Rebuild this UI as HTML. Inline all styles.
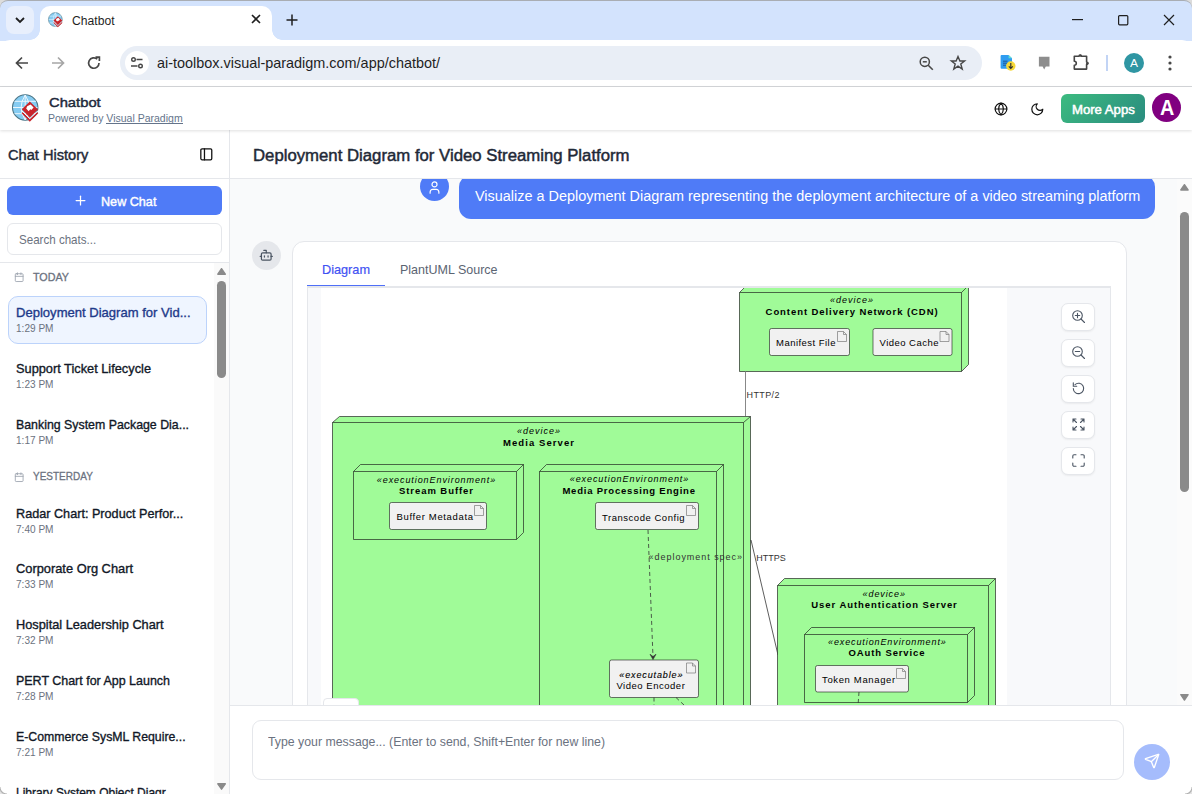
<!DOCTYPE html>
<html><head><meta charset="utf-8">
<style>
*{box-sizing:border-box;margin:0;padding:0}
html,body{width:1192px;height:794px;overflow:hidden;font-family:"Liberation Sans",sans-serif;background:#fff;position:relative}
.abs{position:absolute}
.t{position:absolute;line-height:1;white-space:nowrap;transform-origin:0 0}
svg{display:block;position:absolute;overflow:visible}
</style></head><body>

<div class="abs" style="left:0;top:0;width:1192px;height:41px;background:#dcdcdc"></div><div class="abs" style="left:0;top:0;width:1192px;height:41px;background:#d3e3fd;border-top:1px solid #a9adb3;border-radius:8px 8px 0 0"></div>
<div class="abs" style="left:6px;top:6px;width:28px;height:28px;background:#e8effc;border-radius:8px"></div>
<svg style="left:14px;top:15px" width="12" height="10" viewBox="0 0 12 10"><path d="M2 3 L6 7 L10 3" fill="none" stroke="#1f1f1f" stroke-width="1.8"/></svg>
<div class="abs" style="left:40px;top:6px;width:232px;height:36px;background:#fff;border-radius:10px 10px 0 0"></div>
<div class="abs" style="left:30px;top:30px;width:10px;height:10px;background:radial-gradient(circle at 0 0,transparent 9.5px,#fff 10px)"></div>
<div class="abs" style="left:272px;top:30px;width:10px;height:10px;background:radial-gradient(circle at 100% 0,transparent 9.5px,#fff 10px)"></div>
<svg style="left:46.36px;top:10.26px" width="18.5" height="18.5" viewBox="8 90 34 34">
  <circle cx="25.2" cy="107.5" r="12.7" fill="#86ccf2" stroke="#4d7686" stroke-width="1.1"/>
  <g stroke="#eaf6fd" stroke-width="1" fill="none">
    <path d="M14.5 101.3H36M13 107.5H37.5M14.5 113.7H36"/>
    <path d="M25.2 95V120M25.2 95Q17 107.5 25.2 120M25.2 95Q33.4 107.5 25.2 120"/>
  </g>
  <path d="M22.3 112.6 L29.8 120.3 L37.6 112.6" fill="none" stroke="#c9242b" stroke-width="1.9"/>
  <path d="M21.5 110.5 L29.8 118.6 L38.4 110.5" fill="none" stroke="#fff" stroke-width="1"/>
  <path d="M29.8 101.4 L38.1 109.5 L29.8 117.4 L21.8 109.3Z" fill="#c9242b"/>
  <path d="M27.2 106.3 L30.6 104.4 L33.6 107.6 L31.4 110.1 L30.3 109.2 L28.6 111.3 L26.2 108.6Z" fill="#fff"/>
</svg>
<svg style="left:250px;top:13px" width="12" height="12" viewBox="0 0 12 12"><path d="M2 2L10 10M10 2L2 10" stroke="#1f1f1f" stroke-width="1.6"/></svg>
<svg style="left:286px;top:14px" width="12" height="12" viewBox="0 0 12 12"><path d="M6 0.5V11.5M0.5 6H11.5" stroke="#1f1f1f" stroke-width="1.5"/></svg>
<svg style="left:1072px;top:19px" width="11" height="2"><rect width="11" height="1.2" fill="#1f1f1f"/></svg>
<svg style="left:1117px;top:14px" width="12" height="12" viewBox="0 0 12 12"><rect x="1.6" y="1.6" width="9.2" height="9.2" rx="1" fill="none" stroke="#1f1f1f" stroke-width="1.2"/></svg>
<svg style="left:1163px;top:14px" width="12" height="12" viewBox="0 0 12 12"><path d="M1 1L11 11M11 1L1 11" stroke="#1f1f1f" stroke-width="1.2"/></svg>
<div class="abs" style="left:0;top:40px;width:1192px;height:47px;background:#fff;border-bottom:1px solid #d5d7da;border-radius:10px 10px 0 0"></div>
<svg style="left:14px;top:55px" width="16" height="16" viewBox="0 0 16 16"><path d="M14 8H2.5M8 2.5L2.5 8L8 13.5" fill="none" stroke="#474747" stroke-width="1.7"/></svg>
<svg style="left:50px;top:55px" width="16" height="16" viewBox="0 0 16 16"><path d="M2 8H13.5M8 2.5L13.5 8L8 13.5" fill="none" stroke="#a6a6a6" stroke-width="1.7"/></svg>
<svg style="left:86px;top:55px" width="16" height="16" viewBox="0 0 16 16"><path d="M13 8A5.2 5.2 0 1 1 11.3 4.2" fill="none" stroke="#474747" stroke-width="1.7"/><path d="M9.5 2.2H13.4V6.1" fill="none" stroke="#474747" stroke-width="1.7"/></svg>
<div class="abs" style="left:120px;top:46px;width:862px;height:34px;background:#e9eef6;border-radius:17px"></div>
<div class="abs" style="left:125px;top:51px;width:24px;height:24px;border-radius:12px;background:#fff"></div>
<svg style="left:130px;top:56px" width="14" height="14" viewBox="0 0 14 14"><circle cx="3.5" cy="3.5" r="1.8" fill="none" stroke="#474747" stroke-width="1.4"/><path d="M6.5 3.5H12.5M1 10H7.5" stroke="#474747" stroke-width="1.4"/><circle cx="10.5" cy="10" r="1.8" fill="none" stroke="#474747" stroke-width="1.4"/></svg>
<svg style="left:919px;top:56px" width="15" height="15" viewBox="0 0 15 15"><circle cx="5.8" cy="5.8" r="4.6" fill="none" stroke="#474747" stroke-width="1.5"/><path d="M3.8 5.8H7.8" stroke="#474747" stroke-width="1.5"/><path d="M9.2 9.2L13.8 13.8" stroke="#474747" stroke-width="1.6"/></svg>
<svg style="left:950px;top:55px" width="16" height="16" viewBox="0 0 16 16"><path d="M8 1.5L9.9 6H14.6L10.8 9L12.2 14L8 11.1L3.8 14L5.2 9L1.4 6H6.1Z" fill="none" stroke="#474747" stroke-width="1.4"/></svg>
<svg style="left:990px;top:48px" width="110" height="30" viewBox="990 48 110 30">
  <path d="M1001.6 54.9 H1008.6 L1012 58.3 V67.6 A1 1 0 0 1 1011 68.7 H1001.6 A1 1 0 0 1 1000.6 67.7 V55.9 A1 1 0 0 1 1001.6 54.9Z" fill="#2f9cf0"/>
  <path d="M1008.6 54.9 L1012 58.3 H1008.6Z" fill="#5fe3d0"/>
  <path d="M1003 61.2H1007.5M1003 63.2H1007.5M1003 65.2H1006" stroke="#1d4f8c" stroke-width="0.9"/>
  <circle cx="1010.8" cy="66" r="4.7" fill="#f6d838"/>
  <path d="M1010.8 63V68.3M1008.8 66.4L1010.8 68.5L1012.8 66.4" fill="none" stroke="#2d2d2d" stroke-width="1.1"/>
  <path d="M1038.9 56.8H1049.5V66.5H1045.8L1044.2 69.5L1042.6 66.5H1038.9Z" fill="#8d8d8d"/>
  <path d="M1074.3 56.3H1079A1.2 1.2 0 0 1 1081.4 56.3H1086.6V62A1.2 1.2 0 0 1 1086.6 64.4V69.1H1074.3V65.2A2 2 0 0 0 1074.3 61.2Z" fill="none" stroke="#454545" stroke-width="1.6" stroke-linejoin="round"/><circle cx="1080.2" cy="55.6" r="1.2" fill="#454545"/><circle cx="1087.4" cy="63.2" r="1.2" fill="#454545"/>
</svg>
<div class="abs" style="left:1106px;top:55px;width:1.5px;height:16px;background:#c2d4f5"></div>
<div class="abs" style="left:1124px;top:53px;width:20px;height:20px;border-radius:10px;background:#2f96a3"></div>
<svg style="left:1167px;top:55px" width="6" height="16" viewBox="0 0 6 16"><circle cx="3" cy="2" r="1.6" fill="#474747"/><circle cx="3" cy="8" r="1.6" fill="#474747"/><circle cx="3" cy="14" r="1.6" fill="#474747"/></svg>

<div class="t" style="left:72.10px;top:14.62px;font-size:12.5px;color:#1f1f1f;transform:scaleX(0.9709);">Chatbot</div>
<div class="t" style="left:157.00px;top:55.73px;font-size:14.5px;color:#1f1f1f;transform:scaleX(0.9947);">ai-toolbox.visual-paradigm.com/app/chatbot/</div>
<div class="t" style="left:1130.00px;top:58.19px;font-size:11px;color:#fff;transform:scaleX(1.0904);">A</div>
<div class="abs" style="left:0;top:87px;width:1192px;height:43px;background:#fff;box-shadow:0 1px 3px rgba(0,0,0,.13);z-index:3"></div>
<div class="abs" style="left:0;top:87px;width:1192px;height:43px;z-index:4">
<svg style="left:8px;top:3px" width="34" height="34" viewBox="8 90 34 34">
  <circle cx="25.2" cy="107.5" r="12.7" fill="#86ccf2" stroke="#4d7686" stroke-width="1.1"/>
  <g stroke="#eaf6fd" stroke-width="1" fill="none">
    <path d="M14.5 101.3H36M13 107.5H37.5M14.5 113.7H36"/>
    <path d="M25.2 95V120M25.2 95Q17 107.5 25.2 120M25.2 95Q33.4 107.5 25.2 120"/>
  </g>
  <path d="M22.3 112.6 L29.8 120.3 L37.6 112.6" fill="none" stroke="#c9242b" stroke-width="1.9"/>
  <path d="M21.5 110.5 L29.8 118.6 L38.4 110.5" fill="none" stroke="#fff" stroke-width="1"/>
  <path d="M29.8 101.4 L38.1 109.5 L29.8 117.4 L21.8 109.3Z" fill="#c9242b"/>
  <path d="M27.2 106.3 L30.6 104.4 L33.6 107.6 L31.4 110.1 L30.3 109.2 L28.6 111.3 L26.2 108.6Z" fill="#fff"/>
</svg>
<svg style="left:994.15px;top:14.5px" width="14" height="14" viewBox="0 0 24 24" fill="none" stroke="#111" stroke-width="2" stroke-linecap="round" stroke-linejoin="round"><circle cx="12" cy="12" r="10"/><path d="M12 2a14.5 14.5 0 0 0 0 20 14.5 14.5 0 0 0 0-20"/><path d="M2 12h20"/></svg>
<svg style="left:1029.8px;top:14.9px" width="14.6" height="14.6" viewBox="0 0 24 24" fill="none" stroke="#111" stroke-width="2" stroke-linecap="round" stroke-linejoin="round"><path d="M12 3a6 6 0 0 0 9 9 9 9 0 1 1-9-9Z"/></svg>
<div class="abs" style="left:1061px;top:7px;width:84px;height:29px;border-radius:6px;background:linear-gradient(135deg,#3cbb80,#2a8c7f)"></div>
<div class="abs" style="left:1152px;top:6px;width:29px;height:29px;border-radius:15px;background:#800080"></div>
</div>
<div class="abs" style="left:0;top:0;width:1192px;height:794px;z-index:5;pointer-events:none">

<div class="t" style="left:48.50px;top:96.27px;font-size:13.5px;color:#1e293b;transform:scaleX(1.0936);-webkit-text-stroke:0.45px #1e293b;">Chatbot</div>
<div class="t" style="left:48.00px;top:112.61px;font-size:10.5px;color:#64748b;">Powered by Visual Paradigm</div>
<div class="abs" style="left:106px;top:122.5px;width:76.5px;height:1px;background:#64748b"></div>
<div class="t" style="left:1072.00px;top:104.02px;font-size:12.5px;color:#fff;transform:scaleX(1.0510);-webkit-text-stroke:0.5px #fff;">More Apps</div>
<div class="t" style="left:1159.70px;top:96.98px;font-size:22px;color:#fff;font-weight:bold;transform:scaleX(0.9003);">A</div>
</div>
<div class="abs" style="left:0;top:130px;width:230px;height:664px;background:#fff;border-right:1px solid #e5e7eb"></div>
<div class="abs" style="left:0;top:178px;width:229px;height:1px;background:#e5e7eb"></div>
<svg style="left:199px;top:146.8px" width="14.6" height="14.6" viewBox="0 0 24 24" fill="none" stroke="#111" stroke-width="2.1" stroke-linecap="round" stroke-linejoin="round"><rect width="18" height="18" x="3" y="3" rx="2"/><path d="M9 3v18"/></svg>
<div class="abs" style="left:7px;top:186px;width:215px;height:29px;border-radius:6px;background:#4f7bf7"></div>
<svg style="left:72.5px;top:192.9px" width="15" height="15" viewBox="0 0 24 24" fill="none" stroke="#fff" stroke-width="2" stroke-linecap="round" stroke-linejoin="round"><path d="M5 12h14"/><path d="M12 5v14"/></svg>
<div class="abs" style="left:7px;top:222.5px;width:215px;height:32px;border-radius:6px;border:1px solid #e5e7eb;background:#fff"></div>
<div class="abs" style="left:0;top:262px;width:229px;height:1px;background:#e5e7eb"></div>
<div class="abs" style="left:214px;top:263px;width:15px;height:531px;background:#fafafa"></div>
<svg style="left:210px;top:260px" width="20" height="20" viewBox="210 260 20 20"><path d="M217.8 274.2L225.3 274.2L221.55 268.7Z" fill="#8a8a8a" stroke="#8a8a8a" stroke-width="1.4" stroke-linejoin="round"/></svg>
<div class="abs" style="left:217px;top:281px;width:9px;height:97px;border-radius:4.5px;background:#8a8a8a"></div>
<svg style="left:210px;top:775px" width="20" height="19" viewBox="210 775 20 19"><path d="M217.8 783.8L225.3 783.8L221.55 789.2Z" fill="#8a8a8a" stroke="#8a8a8a" stroke-width="1.4" stroke-linejoin="round"/></svg>
<div class="abs" style="left:7.5px;top:295.5px;width:199px;height:48px;border-radius:10px;background:#eff5ff;border:1px solid #bcd3fb"></div>

<div class="t" style="left:7.70px;top:148.15px;font-size:14px;color:#1f2937;transform:scaleX(1.0427);-webkit-text-stroke:0.4px #1f2937;">Chat History</div>
<div class="t" style="left:100.60px;top:196.22px;font-size:12.5px;color:#fff;transform:scaleX(1.0093);-webkit-text-stroke:0.4px #fff;">New Chat</div>
<div class="t" style="left:19.30px;top:233.20px;font-size:13px;color:#6b7280;transform:scaleX(0.8903);">Search chats...</div>
<svg style="left:14.2px;top:271.6px" width="10.4" height="10.4" viewBox="0 0 24 24" fill="none" stroke="#9ca3af" stroke-width="2" stroke-linecap="round" stroke-linejoin="round"><path d="M8 2v4"/><path d="M16 2v4"/><rect width="18" height="18" x="3" y="4" rx="2"/><path d="M3 10h18"/></svg>
<div class="t" style="left:33.00px;top:271.69px;font-size:11px;color:#6b7280;transform:scaleX(0.9761);-webkit-text-stroke:0.3px #6b7280;">TODAY</div>
<svg style="left:14.2px;top:471.6px" width="10.4" height="10.4" viewBox="0 0 24 24" fill="none" stroke="#9ca3af" stroke-width="2" stroke-linecap="round" stroke-linejoin="round"><path d="M8 2v4"/><path d="M16 2v4"/><rect width="18" height="18" x="3" y="4" rx="2"/><path d="M3 10h18"/></svg>
<div class="t" style="left:32.80px;top:471.39px;font-size:11px;color:#6b7280;transform:scaleX(0.9086);-webkit-text-stroke:0.3px #6b7280;">YESTERDAY</div>
<div class="t" style="left:16.00px;top:305.80px;font-size:13px;color:#1e3a8a;transform:scaleX(1.0041);-webkit-text-stroke:0.35px #1e3a8a;">Deployment Diagram for Vid...</div>
<div class="t" style="left:16.00px;top:322.91px;font-size:10.5px;color:#6b7280;transform:scaleX(0.9590);">1:29 PM</div>
<div class="t" style="left:16.00px;top:361.90px;font-size:13px;color:#111827;transform:scaleX(0.9833);-webkit-text-stroke:0.35px #111827;">Support Ticket Lifecycle</div>
<div class="t" style="left:16.00px;top:379.11px;font-size:10.5px;color:#6b7280;transform:scaleX(0.9590);">1:23 PM</div>
<div class="t" style="left:16.00px;top:418.20px;font-size:13px;color:#111827;transform:scaleX(0.9501);-webkit-text-stroke:0.35px #111827;">Banking System Package Dia...</div>
<div class="t" style="left:16.00px;top:434.81px;font-size:10.5px;color:#6b7280;transform:scaleX(0.9590);">1:17 PM</div>
<div class="t" style="left:16.00px;top:506.80px;font-size:13px;color:#111827;transform:scaleX(0.9729);-webkit-text-stroke:0.35px #111827;">Radar Chart: Product Perfor...</div>
<div class="t" style="left:16.00px;top:523.61px;font-size:10.5px;color:#6b7280;transform:scaleX(0.9590);">7:40 PM</div>
<div class="t" style="left:16.00px;top:561.80px;font-size:13px;color:#111827;transform:scaleX(0.9874);-webkit-text-stroke:0.35px #111827;">Corporate Org Chart</div>
<div class="t" style="left:16.00px;top:579.01px;font-size:10.5px;color:#6b7280;transform:scaleX(0.9590);">7:33 PM</div>
<div class="t" style="left:16.00px;top:617.50px;font-size:13px;color:#111827;transform:scaleX(0.9820);-webkit-text-stroke:0.35px #111827;">Hospital Leadership Chart</div>
<div class="t" style="left:16.00px;top:635.11px;font-size:10.5px;color:#6b7280;transform:scaleX(0.9590);">7:32 PM</div>
<div class="t" style="left:16.00px;top:673.60px;font-size:13px;color:#111827;transform:scaleX(0.9585);-webkit-text-stroke:0.35px #111827;">PERT Chart for App Launch</div>
<div class="t" style="left:16.00px;top:691.01px;font-size:10.5px;color:#6b7280;transform:scaleX(0.9590);">7:28 PM</div>
<div class="t" style="left:16.00px;top:729.90px;font-size:13px;color:#111827;transform:scaleX(0.9454);-webkit-text-stroke:0.35px #111827;">E-Commerce SysML Require...</div>
<div class="t" style="left:16.00px;top:747.11px;font-size:10.5px;color:#6b7280;transform:scaleX(0.9590);">7:21 PM</div>
<div class="t" style="left:16.00px;top:785.60px;font-size:13px;color:#111827;transform:scaleX(0.9209);-webkit-text-stroke:0.35px #111827;">Library System Object Diagr...</div>
<div class="t" style="left:16.00px;top:802.71px;font-size:10.5px;color:#6b7280;transform:scaleX(0.9590);">7:18 PM</div>
<div class="abs" style="left:230px;top:130px;width:962px;height:49px;background:#fff;border-bottom:1px solid #e5e7eb"></div>
<div class="abs" style="left:230px;top:179px;width:962px;height:526px;background:#f9fafb;overflow:hidden">

</div>
<div class="abs" style="left:230px;top:179px;width:962px;height:526px;overflow:hidden">
<div class="abs" style="left:-230px;top:-179px;width:1192px;height:794px">
<div class="abs" style="left:420px;top:172px;width:29px;height:29px;border-radius:15px;background:#4f7bf7"></div>
<svg style="left:426.6px;top:179.97px" width="15" height="15" viewBox="0 0 24 24" fill="none" stroke="#fff" stroke-width="1.9" stroke-linecap="round" stroke-linejoin="round"><circle cx="12" cy="7" r="4"/><path d="M19 21v-2a4 4 0 0 0-4-4H9a4 4 0 0 0-4 4v2"/></svg>
<div class="abs" style="left:459px;top:174.5px;width:696px;height:44.3px;border-radius:12px;background:#4f7bf7"></div>
<div class="t" style="left:474.60px;top:188.85px;font-size:14px;color:#fff;transform:scaleX(1.0306);">Visualize a Deployment Diagram representing the deployment architecture of a video streaming platform</div>
<div class="abs" style="left:252px;top:241px;width:29px;height:29px;border-radius:15px;background:#e5e7eb"></div>
<svg style="left:259.2px;top:247.9px" width="14.5" height="14.5" viewBox="0 0 24 24" fill="none" stroke="#4b5563" stroke-width="2" stroke-linecap="round" stroke-linejoin="round"><path d="M12 8V4H8"/><rect width="16" height="12" x="4" y="8" rx="2"/><path d="M2 14h2"/><path d="M20 14h2"/><path d="M15 13v2"/><path d="M9 13v2"/></svg>
<div class="abs" style="left:292px;top:241px;width:835px;height:600px;border-radius:12px;background:#fff;border:1px solid #e5e7eb"></div>
<div class="t" style="left:322.00px;top:263.00px;font-size:13px;color:#3f52f3;transform:scaleX(0.9771);-webkit-text-stroke:0.2px #3f52f3;">Diagram</div>
<div class="t" style="left:399.50px;top:263.00px;font-size:13px;color:#5b6472;transform:scaleX(0.9615);">PlantUML Source</div>
<div class="abs" style="left:307px;top:286.3px;width:804px;height:1.5px;background:#e5e7eb"></div>
<div class="abs" style="left:307px;top:284.8px;width:78px;height:1.6px;background:#4f6ff7"></div>
<div class="abs" style="left:307px;top:287.5px;width:804px;height:500px;background:#f8f9fb;border:1px solid #e5e7eb;border-top:none"></div>
<div class="abs" style="left:321px;top:288px;width:686px;height:500px;background:#fff"></div>
<div class="abs" style="left:308px;top:288px;width:802px;height:500px;overflow:hidden">
<svg style="left:-308px;top:-288px" width="1192" height="794" viewBox="0 0 1192 794" font-family="Liberation Sans">
<rect x="0" y="0" width="0" height="0"/>
<path d="M739.5 292.5 L746.5 285.5 L968.5 285.5 L968.5 364.5 L961.5 371.5 L739.5 371.5 Z" fill="#a0fb98" stroke="#181818" stroke-opacity="0.65" stroke-width="1"/><path d="M739.5 292.5 L961.5 292.5 L968.5 285.5 M961.5 292.5 L961.5 371.5" fill="none" stroke="#181818" stroke-opacity="0.65" stroke-width="1"/>
<rect x="769.5" y="328.5" width="80.0" height="27.0" rx="2" fill="#f1f1f1" stroke="#181818" stroke-width="0.6"/><path d="M837.5 331.5 H843.5 L846.5 334.5 V341.5 H837.5 Z M843.5 331.5 V334.5 H846.5" fill="#f1f1f1" stroke="#7a7a7a" stroke-width="0.7"/>
<rect x="873" y="328.5" width="79" height="27.0" rx="2" fill="#f1f1f1" stroke="#181818" stroke-width="0.6"/><path d="M940 331.5 H946 L949 334.5 V341.5 H940 Z M946 331.5 V334.5 H949" fill="#f1f1f1" stroke="#7a7a7a" stroke-width="0.7"/>
<text x="830.00" y="303.10" font-size="9" fill="#000" textLength="43.00" lengthAdjust="spacing" font-style="italic">«device»</text>
<text x="765.60" y="314.70" font-size="9.5" fill="#000" textLength="172.00" lengthAdjust="spacing" font-weight="bold">Content Delivery Network (CDN)</text>
<text x="776.00" y="346.10" font-size="9.5" fill="#000" textLength="59.50" lengthAdjust="spacing">Manifest File</text>
<text x="879.50" y="346.10" font-size="9.5" fill="#000" textLength="59.00" lengthAdjust="spacing">Video Cache</text>
<path d="M745.5 371.5 V416" stroke="#888" stroke-width="1" fill="none"/>
<text x="746.50" y="397.50" font-size="9" fill="#333" textLength="33.00" lengthAdjust="spacing">HTTP/2</text>
<path d="M332.5 422.5 L339.5 416.5 L750.5 416.5 L750.5 754 L743.5 760 L332.5 760 Z" fill="#a0fb98" stroke="#181818" stroke-opacity="0.65" stroke-width="1"/><path d="M332.5 422.5 L743.5 422.5 L750.5 416.5 M743.5 422.5 L743.5 760" fill="none" stroke="#181818" stroke-opacity="0.65" stroke-width="1"/>
<text x="517.00" y="434.30" font-size="9" fill="#000" textLength="43.00" lengthAdjust="spacing" font-style="italic">«device»</text>
<text x="503.00" y="445.80" font-size="9.5" fill="#000" textLength="71.00" lengthAdjust="spacing" font-weight="bold">Media Server</text>
<path d="M353.5 471.5 L360.5 464.5 L523.5 464.5 L523.5 532.5 L516.5 539.5 L353.5 539.5 Z" fill="#a0fb98" stroke="#181818" stroke-opacity="0.65" stroke-width="1"/><path d="M353.5 471.5 L516.5 471.5 L523.5 464.5 M516.5 471.5 L516.5 539.5" fill="none" stroke="#181818" stroke-opacity="0.65" stroke-width="1"/>
<text x="376.80" y="482.60" font-size="9" fill="#000" textLength="118.40" lengthAdjust="spacing" font-style="italic">«executionEnvironment»</text>
<text x="399.00" y="493.50" font-size="9.5" fill="#000" textLength="74.00" lengthAdjust="spacing" font-weight="bold">Stream Buffer</text>
<rect x="389.5" y="502.5" width="97.0" height="27.0" rx="2" fill="#f1f1f1" stroke="#181818" stroke-width="0.6"/><path d="M474.5 505.5 H480.5 L483.5 508.5 V515.5 H474.5 Z M480.5 505.5 V508.5 H483.5" fill="#f1f1f1" stroke="#7a7a7a" stroke-width="0.7"/>
<text x="396.50" y="520.30" font-size="9.5" fill="#000" textLength="76.49" lengthAdjust="spacing">Buffer Metadata</text>
<path d="M539.5 471.5 L546.5 464.5 L723.5 464.5 L723.5 753 L716.5 760 L539.5 760 Z" fill="#a0fb98" stroke="#181818" stroke-opacity="0.65" stroke-width="1"/><path d="M539.5 471.5 L716.5 471.5 L723.5 464.5 M716.5 471.5 L716.5 760" fill="none" stroke="#181818" stroke-opacity="0.65" stroke-width="1"/>
<text x="569.70" y="482.10" font-size="9" fill="#000" textLength="118.60" lengthAdjust="spacing" font-style="italic">«executionEnvironment»</text>
<text x="562.40" y="493.50" font-size="9.5" fill="#000" textLength="132.60" lengthAdjust="spacing" font-weight="bold">Media Processing Engine</text>
<rect x="595.5" y="502.5" width="103.0" height="27.0" rx="2" fill="#f1f1f1" stroke="#181818" stroke-width="0.6"/><path d="M686.5 505.5 H692.5 L695.5 508.5 V515.5 H686.5 Z M692.5 505.5 V508.5 H695.5" fill="#f1f1f1" stroke="#7a7a7a" stroke-width="0.7"/>
<text x="602.00" y="520.70" font-size="9.5" fill="#000" textLength="82.60" lengthAdjust="spacing">Transcode Config</text>
<path d="M648 530 L653 657" stroke="#333" stroke-width="0.8" stroke-dasharray="4 3" fill="none"/>
<path d="M650 654.2 L653 659.6 L656 654.2 L653 656.6Z" stroke="#333" stroke-width="0.6" fill="#333" stroke-linejoin="round"/>
<text x="648.60" y="560.40" font-size="9" fill="#333" textLength="93.40" lengthAdjust="spacing">«deployment spec»</text>
<rect x="609.5" y="660" width="89.0" height="37.5" rx="2" fill="#f1f1f1" stroke="#181818" stroke-width="0.6"/><path d="M686.5 663 H692.5 L695.5 666 V673 H686.5 Z M692.5 663 V666 H695.5" fill="#f1f1f1" stroke="#7a7a7a" stroke-width="0.7"/>
<text stroke="#000" stroke-width="0.12" x="619.30" y="678.00" font-size="9" fill="#000" textLength="63.20" lengthAdjust="spacing" font-style="italic">«executable»</text>
<text x="616.40" y="688.90" font-size="9.5" fill="#000" textLength="68.40" lengthAdjust="spacing">Video Encoder</text>
<path d="M654 697.5 V720 M676 697.5 L700 720" stroke="#333" stroke-width="0.8" stroke-dasharray="4 3" fill="none"/>
<path d="M751 540 L778 655" stroke="#181818" stroke-width="0.7" fill="none"/>
<text x="756.30" y="560.50" font-size="9" fill="#333" textLength="29.50" lengthAdjust="spacingAndGlyphs">HTTPS</text>
<path d="M777.5 585.5 L784.5 578.5 L995.5 578.5 L995.5 753 L988.5 760 L777.5 760 Z" fill="#a0fb98" stroke="#181818" stroke-opacity="0.65" stroke-width="1"/><path d="M777.5 585.5 L988.5 585.5 L995.5 578.5 M988.5 585.5 L988.5 760" fill="none" stroke="#181818" stroke-opacity="0.65" stroke-width="1"/>
<text x="862.60" y="597.30" font-size="9" fill="#000" textLength="42.30" lengthAdjust="spacing" font-style="italic">«device»</text>
<text x="811.30" y="608.40" font-size="9.5" fill="#000" textLength="145.50" lengthAdjust="spacing" font-weight="bold">User Authentication Server</text>
<path d="M804.5 634.5 L811.5 627.5 L974.5 627.5 L974.5 695.5 L967.5 702.5 L804.5 702.5 Z" fill="#a0fb98" stroke="#181818" stroke-opacity="0.65" stroke-width="1"/><path d="M804.5 634.5 L967.5 634.5 L974.5 627.5 M967.5 634.5 L967.5 702.5" fill="none" stroke="#181818" stroke-opacity="0.65" stroke-width="1"/>
<text x="828.00" y="645.40" font-size="9" fill="#000" textLength="117.80" lengthAdjust="spacing" font-style="italic">«executionEnvironment»</text>
<text x="848.50" y="656.10" font-size="9.5" fill="#000" textLength="76.00" lengthAdjust="spacing" font-weight="bold">OAuth Service</text>
<rect x="815.5" y="665.5" width="93.0" height="26.5" rx="2" fill="#f1f1f1" stroke="#181818" stroke-width="0.6"/><path d="M896.5 668.5 H902.5 L905.5 671.5 V678.5 H896.5 Z M902.5 668.5 V671.5 H905.5" fill="#f1f1f1" stroke="#7a7a7a" stroke-width="0.7"/>
<text x="822.00" y="683.20" font-size="9.5" fill="#000" textLength="73.20" lengthAdjust="spacing">Token Manager</text>
<path d="M859 692 L857 720" stroke="#333" stroke-width="0.8" stroke-dasharray="4 3" fill="none"/>
</svg></div>
<div class="abs" style="left:322.5px;top:698px;width:36px;height:20px;border-radius:4px;background:#fff;border:1px solid #e5e7eb"></div>
<div class="abs" style="left:1061px;top:302.8px;width:34px;height:28px;border-radius:7px;background:#fff;border:1px solid #e5e7eb;box-shadow:0 1px 2px rgba(0,0,0,.06)"></div>
<div class="abs" style="left:1061px;top:338.8px;width:34px;height:28px;border-radius:7px;background:#fff;border:1px solid #e5e7eb;box-shadow:0 1px 2px rgba(0,0,0,.06)"></div>
<div class="abs" style="left:1061px;top:374.8px;width:34px;height:28px;border-radius:7px;background:#fff;border:1px solid #e5e7eb;box-shadow:0 1px 2px rgba(0,0,0,.06)"></div>
<div class="abs" style="left:1061px;top:410.8px;width:34px;height:28px;border-radius:7px;background:#fff;border:1px solid #e5e7eb;box-shadow:0 1px 2px rgba(0,0,0,.06)"></div>
<div class="abs" style="left:1061px;top:446.8px;width:34px;height:28px;border-radius:7px;background:#fff;border:1px solid #e5e7eb;box-shadow:0 1px 2px rgba(0,0,0,.06)"></div>
<svg style="left:1071px;top:309.3px" width="15" height="15" viewBox="0 0 15 15" fill="none" stroke="#4b5563" stroke-width="1.1" stroke-linecap="round"><circle cx="6.5" cy="6.5" r="4.8"/><path d="M10 10L13.5 13.5M6.5 4.3V8.7M4.3 6.5H8.7"/></svg>
<svg style="left:1071px;top:345.3px" width="15" height="15" viewBox="0 0 15 15" fill="none" stroke="#4b5563" stroke-width="1.1" stroke-linecap="round"><circle cx="6.5" cy="6.5" r="4.8"/><path d="M10 10L13.5 13.5M4.3 6.5H8.7"/></svg>
<svg style="left:1071px;top:381.3px" width="15" height="15" viewBox="0 0 15 15" fill="none" stroke="#4b5563" stroke-width="1.1" stroke-linecap="round"><path d="M2.3 7.5A5.2 5.2 0 1 0 4 3.6"/><path d="M2.3 1.8V5.2H5.7"/></svg>
<svg style="left:1071px;top:417.3px" width="15" height="15" viewBox="0 0 15 15" fill="none" stroke="#4b5563" stroke-width="1.1" stroke-linecap="round"><path d="M2 2L5.5 5.5M2 2V5M2 2H5M13 2L9.5 5.5M13 2V5M13 2H10M2 13L5.5 9.5M2 13V10M2 13H5M13 13L9.5 9.5M13 13V10M13 13H10"/></svg>
<svg style="left:1071px;top:453.3px" width="15" height="15" viewBox="0 0 15 15" fill="none" stroke="#4b5563" stroke-width="1.1" stroke-linecap="round"><path d="M1.8 5V3A1.2 1.2 0 0 1 3 1.8H5M10 1.8H12A1.2 1.2 0 0 1 13.2 3V5M13.2 10V12A1.2 1.2 0 0 1 12 13.2H10M5 13.2H3A1.2 1.2 0 0 1 1.8 12V10"/></svg>
</div></div>
<div class="abs" style="left:1177px;top:179px;width:15px;height:526px;background:#fbfbfb"></div>
<svg style="left:1175px;top:179px" width="17" height="15" viewBox="1175 179 17 15"><path d="M1180.8 190L1188.1 190L1184.45 184.7Z" fill="#8a8a8a" stroke="#8a8a8a" stroke-width="1.4" stroke-linejoin="round"/></svg>
<div class="abs" style="left:1180px;top:212px;width:9px;height:280px;border-radius:4.5px;background:#8a8a8a"></div>
<svg style="left:1175px;top:690px" width="17" height="15" viewBox="1175 690 17 15"><path d="M1180.8 694.7L1188.1 694.7L1184.45 700.1Z" fill="#8a8a8a" stroke="#8a8a8a" stroke-width="1.4" stroke-linejoin="round"/></svg>
<div class="t" style="left:252.80px;top:147.56px;font-size:16px;color:#1f2937;transform:scaleX(1.0463);-webkit-text-stroke:0.45px #1f2937;">Deployment Diagram for Video Streaming Platform</div>
<div class="abs" style="left:230px;top:705px;width:962px;height:89px;background:#fff;border-top:1px solid #e5e7eb"></div>
<div class="abs" style="left:252px;top:720px;width:872px;height:59.5px;border:1px solid #e5e7eb;border-radius:9px;background:#fff"></div>
<div class="abs" style="left:1134px;top:744px;width:36px;height:36px;border-radius:18px;background:#a5bcfc"></div>
<svg style="left:1144.3px;top:753.3px" width="16" height="16" viewBox="0 0 24 24" fill="none" stroke="#fff" stroke-width="2" stroke-linecap="round" stroke-linejoin="round"><path d="M14.536 21.686a.5.5 0 0 0 .937-.024l6.5-19a.496.496 0 0 0-.635-.635l-19 6.5a.5.5 0 0 0-.024.937l7.93 3.18a2 2 0 0 1 1.112 1.11z"/><path d="m21.854 2.147-10.94 10.939"/></svg>

<div class="t" style="left:268.20px;top:735.30px;font-size:13px;color:#6b7280;transform:scaleX(0.9470);">Type your message... (Enter to send, Shift+Enter for new line)</div>
<div class="abs" style="left:0;top:787px;width:7px;height:7px;z-index:50;background:radial-gradient(circle at 100% 0,transparent 6px,rgba(110,110,110,.55) 7px,rgba(200,200,200,.5) 8.5px)"></div>
<div class="abs" style="left:1185px;top:787px;width:7px;height:7px;z-index:50;background:radial-gradient(circle at 0 0,transparent 6px,rgba(110,110,110,.55) 7px,rgba(200,200,200,.5) 8.5px)"></div>
</body></html>
